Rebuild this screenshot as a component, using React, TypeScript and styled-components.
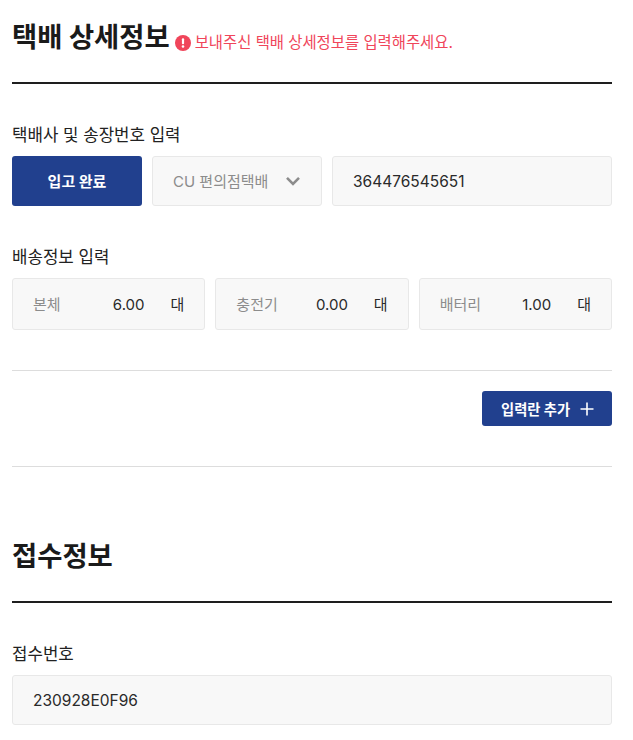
import { createGlobalStyle } from "styled-components";
import styled from "styled-components";

const GlobalStyle = createGlobalStyle`
    html, body {
        margin: 0;
        padding: 0;
        background: #ffffff;
        color: #1a1a1a;
        font-family: Inter, "Noto Sans CJK KR", sans-serif;
    }
    * {
        box-sizing: border-box;
    }
`

const Page = styled.div`
    width: 633px;
    height: 740px;
    overflow: hidden;
    padding: 0 21px 0 12px;
`

const SectionHeader = styled.div<{ $top: number }>`
    display: flex;
    align-items: center;
    padding: ${props => props.$top}px 0 29px;
    border-bottom: 2px solid #1e1e1e;
`

const Title = styled.h2`
    margin: 0;
    font-size: 27.4px;
    line-height: 32px;
    font-weight: 700;
    color: #1a1a1a;
    white-space: nowrap;
`

const Notice = styled.p`
    display: flex;
    align-items: center;
    gap: 4px;
    margin: 12px 0 0 5px;
    font-size: 15.4px;
    line-height: 20px;
    color: #f0455a;
    white-space: nowrap;
`

const Label = styled.div`
    margin: 40px 0 10px;
    font-size: 16.8px;
    line-height: 22px;
    color: #222222;
`

const CourierRow = styled.div`
    display: flex;
    gap: 10px;
`

const DoneButton = styled.button`
    flex: 0 0 130px;
    height: 50px;
    padding: 0 0 2px;
    border: none;
    border-radius: 3px;
    background: #21408e;
    color: #ffffff;
    font-family: inherit;
    font-size: 15px;
    font-weight: 700;
`

const Field = styled.div`
    display: flex;
    align-items: center;
    flex: 1;
    height: 50px;
    padding: 0 20px;
    background: #f8f8f8;
    border: 1px solid #e8e8e8;
    border-radius: 3px;
    font-size: 15.5px;
    color: #2a2a2a;
    white-space: nowrap;
`

const SelectField = styled(Field)`
    flex: 0 0 170px;
    justify-content: space-between;
    padding: 0 20px 1px;
    font-size: 15px;
    color: #8c8c8c;
`

const QuantityRow = styled.div`
    display: grid;
    grid-template-columns: repeat(3, 1fr);
    gap: 10px;
`

const QuantityBox = styled.div`
    display: flex;
    align-items: center;
    height: 52px;
    padding: 0 20px;
    background: #f8f8f8;
    border: 1px solid #e8e8e8;
    border-radius: 3px;
    font-size: 15px;
    white-space: nowrap;
`

const QuantityName = styled.span`
    color: #8c8c8c;
    margin-top: -2px;
`

const QuantityValue = styled.span`
    margin-left: auto;
    color: #2a2a2a;
`

const QuantityUnit = styled.span`
    margin-left: 26px;
    margin-top: -2px;
    color: #2a2a2a;
`

const AddArea = styled.div`
    display: flex;
    justify-content: flex-end;
    margin-top: 40px;
    padding: 20px 0 40px;
    border-top: 1px solid #dddddd;
    border-bottom: 1px solid #dddddd;
`

const AddButton = styled.button`
    display: flex;
    align-items: center;
    gap: 10px;
    height: 35px;
    width: 130px;
    padding: 0 0 0 19px;
    border: none;
    border-radius: 3px;
    background: #21408e;
    color: #ffffff;
    font-family: inherit;
    font-size: 14.3px;
    font-weight: 700;
    white-space: nowrap;
`

function AlertIcon() {
    return (
        <svg width="16" height="16" viewBox="0 0 16 16">
            <circle cx="8" cy="8" r="8" fill="#f0455a" />
            <rect x="6.9" y="3.2" width="2.2" height="6" rx="1" fill="#ffffff" />
            <circle cx="8" cy="11.5" r="1.3" fill="#ffffff" />
        </svg>
    )
}

function ChevronIcon() {
    return (
        <svg width="16" height="10" viewBox="0 0 16 10" fill="none">
            <path d="M2 1.8 L8 7.8 L14 1.8" stroke="#8c8c8c" strokeWidth="2.6" />
        </svg>
    )
}

function PlusIcon() {
    return (
        <svg width="14" height="14" viewBox="0 0 14 14" fill="none">
            <path d="M7 0.5 V13.5 M0.5 7 H13.5" stroke="#ffffff" strokeWidth="1.6" />
        </svg>
    )
}

const quantities = [
    { name: "본체", value: "6.00" },
    { name: "충전기", value: "0.00" },
    { name: "배터리", value: "1.00" },
]

export default function App() {
    return (
        <Page>
            <GlobalStyle />
            <SectionHeader $top={21}>
                <Title>택배 상세정보</Title>
                <Notice>
                    <AlertIcon />
                    보내주신 택배 상세정보를 입력해주세요.
                </Notice>
            </SectionHeader>

            <Label>택배사 및 송장번호 입력</Label>
            <CourierRow>
                <DoneButton>입고 완료</DoneButton>
                <SelectField>
                    CU 편의점택배
                    <ChevronIcon />
                </SelectField>
                <Field>364476545651</Field>
            </CourierRow>

            <Label>배송정보 입력</Label>
            <QuantityRow>
                {quantities.map(item => (
                    <QuantityBox key={item.name}>
                        <QuantityName>{item.name}</QuantityName>
                        <QuantityValue>{item.value}</QuantityValue>
                        <QuantityUnit>대</QuantityUnit>
                    </QuantityBox>
                ))}
            </QuantityRow>

            <AddArea>
                <AddButton>
                    입력란 추가
                    <PlusIcon />
                </AddButton>
            </AddArea>

            <SectionHeader $top={73}>
                <Title>접수정보</Title>
            </SectionHeader>

            <Label>접수번호</Label>
            <Field>230928E0F96</Field>
        </Page>
    )
}
